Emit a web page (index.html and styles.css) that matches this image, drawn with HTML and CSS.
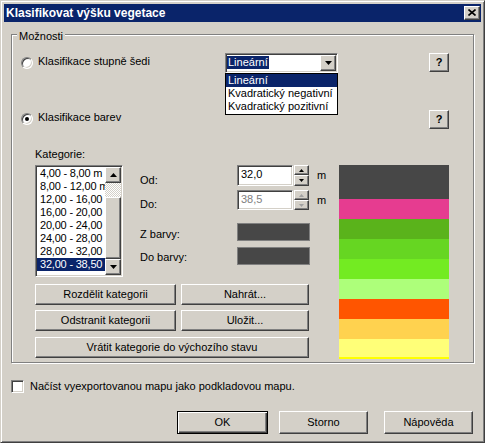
FILE: index.html
```html
<!DOCTYPE html>
<html lang="cs">
<head>
<meta charset="utf-8">
<title>Klasifikovat výšku vegetace</title>
<link rel="stylesheet" href="styles.css">
</head>
<body>
<div class="window">
  <div class="titlebar">
    <span class="title">Klasifikovat výšku vegetace</span>
    <span class="close-btn"><svg width="8" height="7" viewBox="0 0 8 7"><path d="M0.5 0.5 L7.5 6.5 M7.5 0.5 L0.5 6.5" stroke="#000" stroke-width="1.6" fill="none"/></svg></span>
  </div>

  <div class="group">
    <span class="group-label">Možnosti</span>

    <div class="opt-row opt-row-1">
      <div class="opt">
        <span class="radio"></span>
        <span class="opt-label">Klasifikace stupně šedi</span>
      </div>
      <div class="combo">
        <span class="combo-sel">Lineární</span>
        <span class="btn combo-btn"><svg width="7" height="4" viewBox="0 0 7 4"><polygon points="0,0 7,0 3.5,4" fill="#000"/></svg></span>
        <ul class="combo-list">
          <li class="sel">Lineární</li>
          <li>Kvadratický negativní</li>
          <li>Kvadratický pozitivní</li>
        </ul>
      </div>
      <span class="spacer"></span>
      <span class="btn help">?</span>
    </div>

    <div class="opt-row opt-row-2">
      <div class="opt">
        <span class="radio checked"></span>
        <span class="opt-label">Klasifikace barev</span>
      </div>
      <span class="spacer"></span>
      <span class="spacer"></span>
      <span class="btn help">?</span>
    </div>

    <div class="cat-label">Kategorie:</div>

    <div class="cat-area">
      <div class="cat-left">
        <div class="cat-top">
          <div class="listbox">
            <ul class="list-items">
              <li>4,00 - 8,00 m</li>
              <li>8,00 - 12,00 m</li>
              <li>12,00 - 16,00</li>
              <li>16,00 - 20,00</li>
              <li>20,00 - 24,00</li>
              <li>24,00 - 28,00</li>
              <li>28,00 - 32,00</li>
              <li class="sel">32,00 - 38,50</li>
            </ul>
            <div class="vscroll">
              <span class="btn sb-btn"><svg width="7" height="4" viewBox="0 0 7 4"><polygon points="0,4 7,4 3.5,0" fill="#000"/></svg></span>
              <span class="sb-track"></span>
              <span class="btn sb-thumb"></span>
              <span class="btn sb-btn"><svg width="7" height="4" viewBox="0 0 7 4"><polygon points="0,0 7,0 3.5,4" fill="#000"/></svg></span>
            </div>
          </div>

          <div class="fields">
            <div class="field field-od">
              <span class="f-label">Od:</span>
              <span class="edit">32,0</span>
              <span class="spin">
                <span class="btn spin-btn spin-up"><svg width="5" height="3" viewBox="0 0 5 3"><polygon points="0,3 5,3 2.5,0" fill="#000"/></svg></span>
                <span class="btn spin-btn spin-down"><svg width="5" height="3" viewBox="0 0 5 3"><polygon points="0,0 5,0 2.5,3" fill="#000"/></svg></span>
              </span>
              <span class="unit">m</span>
            </div>
            <div class="field field-do">
              <span class="f-label">Do:</span>
              <span class="edit disabled">38,5</span>
              <span class="spin">
                <span class="btn spin-btn spin-up"><svg width="5" height="3" viewBox="0 0 5 3"><polygon points="0,3 5,3 2.5,0" fill="#a0a0a0"/></svg></span>
                <span class="btn spin-btn spin-down"><svg width="5" height="3" viewBox="0 0 5 3"><polygon points="0,0 5,0 2.5,3" fill="#a0a0a0"/></svg></span>
              </span>
              <span class="unit">m</span>
            </div>
            <div class="field field-z">
              <span class="f-label">Z barvy:</span>
              <span class="swatch"></span>
            </div>
            <div class="field field-dob">
              <span class="f-label">Do barvy:</span>
              <span class="swatch"></span>
            </div>
          </div>
        </div>

        <div class="cat-buttons">
          <div class="btn-row">
            <span class="btn cbtn-l">Rozdělit kategorii</span>
            <span class="btn cbtn-r">Nahrát...</span>
          </div>
          <div class="btn-row btn-row-2">
            <span class="btn cbtn-l">Odstranit kategorii</span>
            <span class="btn cbtn-r">Uložit...</span>
          </div>
          <div class="btn-row btn-row-3">
            <span class="btn cbtn-wide">Vrátit kategorie do výchozího stavu</span>
          </div>
        </div>
      </div>

      <div class="strip">
        <span class="band b-dark"></span>
        <span class="band b-pink"></span>
        <span class="band b-g1"></span>
        <span class="band b-g2"></span>
        <span class="band b-g3"></span>
        <span class="band b-lg"></span>
        <span class="band b-or"></span>
        <span class="band b-yo"></span>
        <span class="band b-ly"></span>
        <span class="band b-y"></span>
      </div>
    </div>
  </div>

  <div class="check-row">
    <span class="checkbox"></span>
    <span class="check-label">Načíst vyexportovanou mapu jako podkladovou mapu.</span>
  </div>

  <div class="dlg-buttons">
    <span class="btn default dbtn-ok">OK</span>
    <span class="btn dbtn-storno">Storno</span>
    <span class="btn dbtn-help">Nápověda</span>
  </div>
</div>
</body>
</html>
```

FILE: styles.css
```css
* { box-sizing: border-box; }

html, body {
  margin: 0;
  padding: 0;
  background: #D4D0C8;
}

body {
  font-family: "Liberation Sans", Arial, sans-serif;
  font-size: 11px;
  line-height: 13px;
  color: #000;
}

ul { list-style: none; margin: 0; padding: 0; }

.window {
  width: 485px;
  height: 443px;
  border: 1px solid;
  border-color: #D4D0C8 #404040 #404040 #D4D0C8;
  box-shadow: inset 1px 1px 0 #fff, inset -1px -1px 0 #808080;
  padding: 3px;
  background: #D4D0C8;
}

/* title bar */
.titlebar {
  height: 18px;
  background: #0A246A;
  display: flex;
  align-items: center;
  padding-left: 2px;
}
.title {
  color: #fff;
  font-weight: bold;
  font-size: 12px;
  line-height: 14px;
}
.close-btn {
  margin-left: auto;
  margin-right: 1px;
  width: 16px;
  height: 14px;
  background: #D4D0C8;
  border: 1px solid;
  border-color: #fff #404040 #404040 #fff;
  box-shadow: inset -1px -1px 0 #808080;
  display: flex;
  align-items: center;
  justify-content: center;
  padding-bottom: 1px;
}

/* generic raised button */
.btn {
  background: #D4D0C8;
  border: 1px solid;
  border-color: #fff #404040 #404040 #fff;
  box-shadow: inset -1px -1px 0 #808080;
  display: flex;
  align-items: center;
  justify-content: center;
  white-space: nowrap;
}
.btn.default {
  border: 1px solid #000;
  box-shadow: inset 1px 1px 0 #fff, inset -1px -1px 0 #404040, inset -2px -2px 0 #808080;
}

/* group box */
.group {
  position: relative;
  margin: 12px 0 0 7px;
  width: 463px;
  height: 329px;
  border: 1px solid #808080;
  box-shadow: inset 1px 1px 0 #fff, 1px 1px 0 #fff;
  padding: 18px 24px 0 9px;
}
.group-label {
  position: absolute;
  top: -5px;
  left: 5px;
  padding: 0 2px;
  background: #D4D0C8;
}

.opt-row {
  display: grid;
  grid-template-columns: 204px 113px 1fr 20px;
}
.opt-row-1 { height: 20px; }
.opt-row-2 { margin-top: 37px; height: 19px; }

.opt { display: flex; align-items: flex-start; }
.opt-label { margin-left: 5px; }
.opt-row-1 .radio { margin-top: 4px; }
.opt-row-1 .opt-label { margin-top: 2px; }
.opt-row-2 .radio { margin-top: 3px; }
.opt-row-2 .opt-label { margin-top: 1px; }

.radio {
  width: 12px;
  height: 12px;
  border-radius: 50%;
  border: 1px solid;
  border-color: #808080 #fff #fff #808080;
  box-shadow: inset 1px 1px 0 #404040, inset -1px -1px 0 #D4D0C8;
  background: #fff;
  display: flex;
  align-items: center;
  justify-content: center;
  flex: none;
}
.radio.checked::after {
  content: "";
  width: 4px;
  height: 4px;
  border-radius: 50%;
  background: #000;
}

.help {
  width: 20px;
  height: 19px;
  font-weight: bold;
  font-size: 11px;
  padding-bottom: 1px;
}

/* combo */
.combo {
  position: relative;
  height: 20px;
  width: 113px;
  background: #fff;
  border: 1px solid;
  border-color: #808080 #fff #fff #808080;
  box-shadow: inset 1px 1px 0 #404040, inset -1px -1px 0 #D4D0C8;
  padding: 1px;
  display: flex;
  align-items: flex-start;
}
.combo-sel {
  margin-top: 1px;
  padding: 0 1px;
  background: #0A246A;
  color: #fff;
  height: 13px;
}
.combo-btn {
  margin-left: auto;
  width: 16px;
  height: 16px;
}
.combo-list {
  position: absolute;
  top: 19px;
  left: -1px;
  width: 113px;
  background: #fff;
  border: 1px solid #000;
  padding-bottom: 1px;
  z-index: 2;
}
.combo-list li {
  height: 13px;
  padding-left: 2px;
  white-space: nowrap;
}
.combo-list li.sel { background: #0A246A; color: #fff; }

/* categories */
.cat-label {
  margin: 19px 0 0 14px;
  height: 13px;
}
.cat-area {
  margin: 4px 0 0 14px;
  display: flex;
  align-items: flex-start;
}
.cat-left { width: 296px; flex: none; }
.cat-top { display: flex; align-items: flex-start; }

.listbox {
  width: 88px;
  height: 112px;
  background: #fff;
  border: 1px solid;
  border-color: #808080 #fff #fff #808080;
  box-shadow: inset 1px 1px 0 #404040, inset -1px -1px 0 #D4D0C8;
  padding: 1px;
  display: flex;
  flex: none;
}
.list-items {
  width: 68px;
  overflow: hidden;
}
.list-items li {
  height: 13px;
  padding-left: 3px;
  white-space: nowrap;
  overflow: hidden;
  letter-spacing: -0.2px;
}
.list-items li.sel { background: #0A246A; color: #fff; }

.vscroll {
  width: 16px;
  height: 108px;
  display: flex;
  flex-direction: column;
}
.sb-btn { height: 16px; flex: none; }
.sb-track {
  height: 14px;
  background: repeating-conic-gradient(#fff 0 25%, #D4D0C8 0 50%) 0 0 / 2px 2px;
}
.sb-thumb { height: 62px; flex: none; }

.fields { margin-left: 17px; }
.field { display: flex; align-items: flex-start; }
.f-label { width: 97px; flex: none; }
.field-od { height: 21px; }
.field-od .f-label { padding-top: 9px; }
.field-do { height: 20px; margin-top: 4px; }
.field-do .f-label { padding-top: 8px; }
.field-z { height: 18px; margin-top: 13px; }
.field-z .f-label { padding-top: 5px; }
.field-dob { height: 18px; margin-top: 6px; }
.field-dob .f-label { padding-top: 4px; }

.edit {
  width: 56px;
  height: 21px;
  background: #fff;
  border: 1px solid;
  border-color: #808080 #fff #fff #808080;
  box-shadow: inset 1px 1px 0 #404040, inset -1px -1px 0 #D4D0C8;
  padding: 2px 3px;
}
.field-do .edit { height: 20px; }
.edit.disabled { color: #808080; }

.spin {
  margin-left: 1px;
  width: 15px;
  display: flex;
  flex-direction: column;
}
.spin-up { height: 10px; }
.spin-down { height: 11px; }
.field-do .spin-down { height: 10px; }

.unit { margin-left: 8px; padding-top: 4px; }

.swatch {
  width: 73px;
  height: 18px;
  background: #474747;
  border: 1px solid #808080;
}

.cat-buttons { margin-top: 7px; }
.btn-row { display: flex; height: 21px; }
.btn-row-2 { margin-top: 5px; }
.btn-row-3 { margin-top: 6px; }
.cbtn-l { width: 141px; }
.cbtn-r { width: 128px; margin-left: 5px; }
.cbtn-wide { width: 274px; }

.strip {
  margin-left: 8px;
  width: 110px;
  display: flex;
  flex-direction: column;
}
.band { display: block; height: 20px; }
.b-dark { height: 34px; background: #474747; }
.b-pink { background: #E63C90; }
.b-g1 { background: #5AB31B; }
.b-g2 { background: #66D622; }
.b-g3 { background: #73EB22; }
.b-lg { background: #ADFF7A; }
.b-or { background: #FF5500; }
.b-yo { background: #FFD24F; }
.b-ly { height: 18px; background: #FFFF78; }
.b-y { height: 2px; background: #FFFF00; }

/* bottom */
.check-row {
  margin: 17px 0 0 7px;
  display: flex;
  align-items: flex-start;
  height: 13px;
}
.checkbox {
  width: 13px;
  height: 13px;
  background: #fff;
  border: 1px solid;
  border-color: #808080 #fff #fff #808080;
  box-shadow: inset 1px 1px 0 #404040, inset -1px -1px 0 #D4D0C8;
  flex: none;
}
.check-label { margin-left: 6px; }

.dlg-buttons {
  margin-top: 18px;
  display: flex;
  height: 23px;
}
.dbtn-ok { margin-left: 173px; width: 91px; }
.dbtn-storno { margin-left: 11px; width: 89px; }
.dbtn-help { margin-left: 16px; width: 89px; }
```
